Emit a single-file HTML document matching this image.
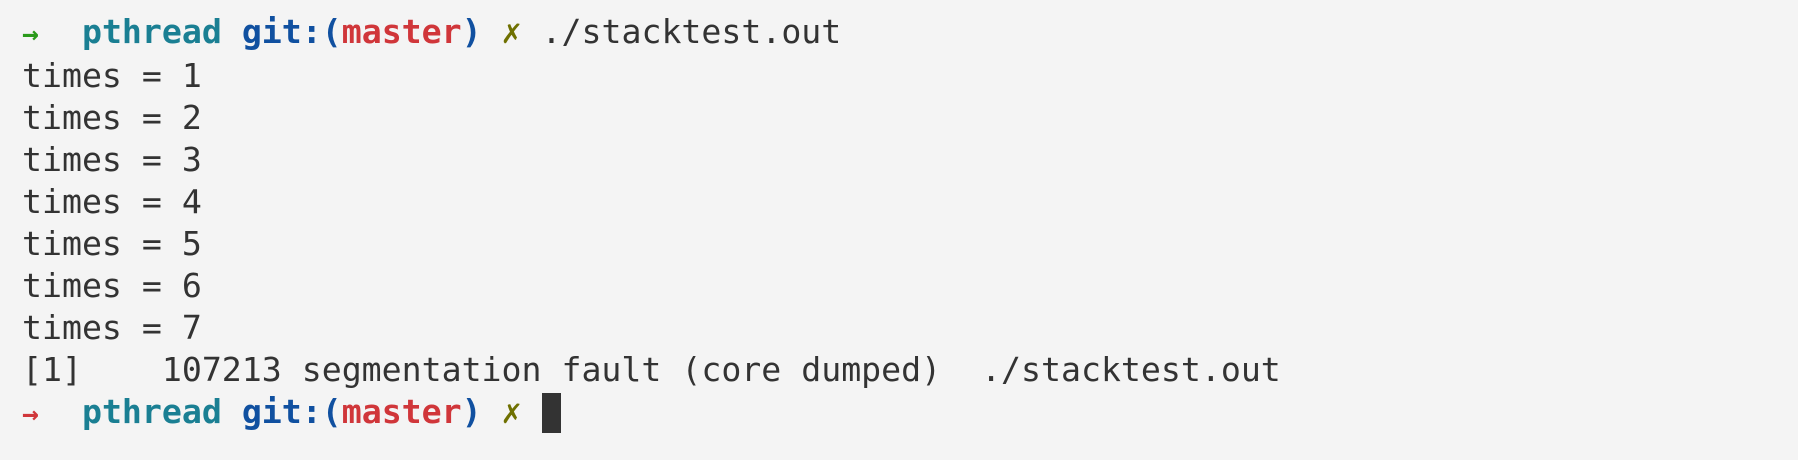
<!DOCTYPE html>
<html><head><style>
html,body{margin:0;padding:0;background:#f4f4f4;width:1798px;height:460px;overflow:hidden}
pre{margin:0;position:absolute;left:22px;top:11px;font-family:"DejaVu Sans Mono","Liberation Mono",monospace;font-size:33.2px;line-height:42px;color:#333}
b{font-weight:bold}
.g{color:#2a9a1a}.r{color:#d0363a}.t{color:#1a7f93}.b{color:#1050a0}.o{color:#6f7000}
.a{display:inline-block;width:20px;font-size:28px;font-weight:bold}
.cur{display:inline-block;width:19px;height:40px;background:#333;vertical-align:-10px}
</style></head><body>
<pre><span class="a g">→</span>  <b class="t">pthread</b> <b class="b">git:(</b><b class="r">master</b><b class="b">)</b> <span class="o">✗</span> ./stacktest.out
times = 1
times = 2
times = 3
times = 4
times = 5
times = 6
times = 7
[1]    107213 segmentation fault (core dumped)  ./stacktest.out
<span class="a r">→</span>  <b class="t">pthread</b> <b class="b">git:(</b><b class="r">master</b><b class="b">)</b> <span class="o">✗</span> <span class="cur"></span></pre>
</body></html>
